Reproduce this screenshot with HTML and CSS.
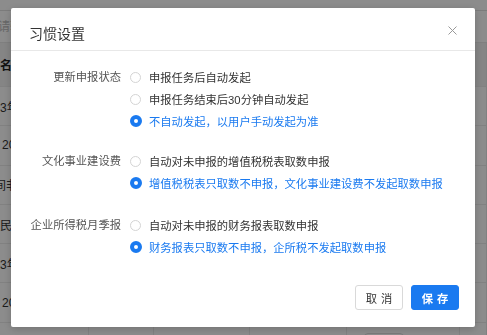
FILE: index.html
```
<!DOCTYPE html>
<html lang="zh-CN">
<head>
  <meta charset="UTF-8" />
  <meta name="viewport" content="width=device-width, initial-scale=1.0" />
  <title>习惯设置</title>
  <link rel="stylesheet" href="styles.css">
</head>
<body>

  <div class="page">
    <div class="toolbar">
      <div class="search">请输入</div>
    </div>
    <table class="grid">
      <thead>
        <tr>
          <th class="first">名称</th><th></th><th></th><th></th><th></th><th></th>
        </tr>
      </thead>
      <tbody>
        <tr><td class="first">3年第一季度</td><td></td><td></td><td></td><td></td><td></td></tr>
        <tr><td class="first shift">2023</td><td></td><td></td><td></td><td></td><td></td></tr>
        <tr><td class="first cut">间非居民</td><td></td><td></td><td></td><td></td><td></td></tr>
        <tr><td class="first">民</td><td></td><td></td><td></td><td></td><td></td></tr>
        <tr><td class="first">3年第二季度</td><td></td><td></td><td></td><td></td><td></td></tr>
        <tr><td class="first shift">2023</td><td></td><td></td><td></td><td></td><td></td></tr>
        <tr><td class="first"></td><td></td><td></td><td></td><td><span class="cell-btn"></span></td><td></td></tr>
      </tbody>
    </table>
  </div>

  <div class="mask">
    <div class="modal">
      <div class="modal-header">
        <span class="modal-title">习惯设置</span>
        <svg class="close" width="9" height="9" viewBox="0 0 9 9">
          <path d="M0.5 0.5 L8.5 8.5 M8.5 0.5 L0.5 8.5" stroke="#999" stroke-width="1" fill="none" />
        </svg>
      </div>

      <div class="modal-body">
        <div class="group">
          <div class="label">更新申报状态</div>
          <div class="options">
            <label class="option"><span class="radio"></span>申报任务后自动发起</label>
            <label class="option"><span class="radio"></span>申报任务结束后30分钟自动发起</label>
            <label class="option checked"><span class="radio"></span>不自动发起，以用户手动发起为准</label>
          </div>
        </div>

        <div class="group">
          <div class="label">文化事业建设费</div>
          <div class="options">
            <label class="option"><span class="radio"></span>自动对未申报的增值税税表取数申报</label>
            <label class="option checked"><span class="radio"></span>增值税税表只取数不申报，文化事业建设费不发起取数申报</label>
          </div>
        </div>

        <div class="group">
          <div class="label">企业所得税月季报</div>
          <div class="options">
            <label class="option"><span class="radio"></span>自动对未申报的财务报表取数申报</label>
            <label class="option checked"><span class="radio"></span>财务报表只取数不申报，企所税不发起取数申报</label>
          </div>
        </div>
      </div>

      <div class="modal-footer">
        <button class="btn">取消</button>
        <button class="btn primary">保存</button>
      </div>
    </div>
  </div>

</body>
</html>
```

FILE: styles.css
```
body {
  margin: 0;
  font-family: "Liberation Sans", "Noto Sans CJK SC", sans-serif;
  font-size: 11.3px;
  color: #333;
  background: #fff;
  overflow: hidden;
}

/* page behind the mask */

.page {
  width: 487px;
  height: 335px;
  overflow: hidden;
}

.toolbar {
  height: 43px;
  box-sizing: border-box;
  padding-top: 10px;
  border-bottom: 1px solid #e8e8e8;
}

.search {
  height: 32px;
  line-height: 32px;
  border-top: 1px solid #e0e0e0;
  color: #bbb;
  font-size: 12px;
  margin-left: -2px;
}

.grid {
  width: 487px;
  border-collapse: collapse;
  table-layout: fixed;
  font-size: 12px;
}

.grid th,
.grid td {
  border: 1px solid #ececec;
  border-top: none;
  padding: 0;
  text-align: left;
  white-space: nowrap;
  overflow: hidden;
}

.grid th {
  height: 43px;
  background: #f2f2f2;
  font-weight: bold;
  color: #222;
}

.grid td {
  height: 38.3px;
}

.grid th:nth-child(1), .grid td:nth-child(1) { width: 88px; }
.grid th:nth-child(2), .grid td:nth-child(2) { width: 64px; }
.grid th:nth-child(3), .grid td:nth-child(3) { width: 95px; }
.grid th:nth-child(4), .grid td:nth-child(4) { width: 96px; }
.grid th:nth-child(5), .grid td:nth-child(5) { width: 112px; }

.grid .first {
  border-left: none;
}

.grid .shift {
  padding-left: 2px;
}

.grid .cut {
  text-indent: -6px;
}

.cell-btn {
  display: inline-block;
  margin: 10px 0 0 17px;
  width: 38px;
  height: 22px;
  border: 1px solid #ddd;
  border-radius: 4px;
}

/* modal */

.mask {
  position: fixed;
  inset: 0;
  background: rgba(0, 0, 0, 0.45);
  padding: 8px 0 0 11px;
}

.modal {
  width: 464px;
  background: #fff;
  border-radius: 2px;
  box-shadow: 0 2px 8px rgba(0, 0, 0, 0.2);
}

.modal-header {
  height: 43px;
  box-sizing: border-box;
  padding: 0 18px;
  border-bottom: 1px solid #e8e8e8;
  display: flex;
  align-items: center;
  justify-content: space-between;
}

.modal-title {
  font-size: 14px;
  color: #333;
  padding-top: 7px;
}

.close {
  margin-top: 3px;
}

.modal-body {
  padding: 15px 0 0 0;
}

.group {
  display: flex;
  margin-bottom: 18px;
}

.group:last-child {
  margin-bottom: 0;
}

.group:nth-child(2) {
  margin-bottom: 20px;
}

.label {
  width: 110px;
  text-align: right;
  line-height: 22px;
  color: #555;
  flex-shrink: 0;
}

.options {
  display: flex;
  flex-direction: column;
  padding-left: 9px;
}

.option {
  display: flex;
  align-items: center;
  height: 22px;
  color: #333;
  white-space: nowrap;
}

.radio {
  width: 11px;
  height: 11px;
  box-sizing: border-box;
  border: 1px solid #d4d4d4;
  border-radius: 50%;
  margin-right: 8px;
  background: #fff;
}

.option.checked {
  color: #1a7af0;
}

.option.checked .radio {
  border: 4px solid #1a7af0;
  width: 12px;
  height: 12px;
  margin-left: -0.5px;
  margin-right: 7.5px;
}

.modal-footer {
  display: flex;
  justify-content: flex-end;
  gap: 8px;
  padding: 27px 16px 17px 0;
}

.btn {
  width: 48px;
  height: 25px;
  border: 1px solid #d9d9d9;
  border-radius: 3px;
  background: #fff;
  color: #333;
  font-family: inherit;
  font-size: 11.3px;
  letter-spacing: 4px;
  text-indent: 4px;
  padding: 0;
  cursor: pointer;
}

.btn.primary {
  background: #1a7af0;
  border-color: #1a7af0;
  color: #fff;
  font-weight: bold;
}
```
